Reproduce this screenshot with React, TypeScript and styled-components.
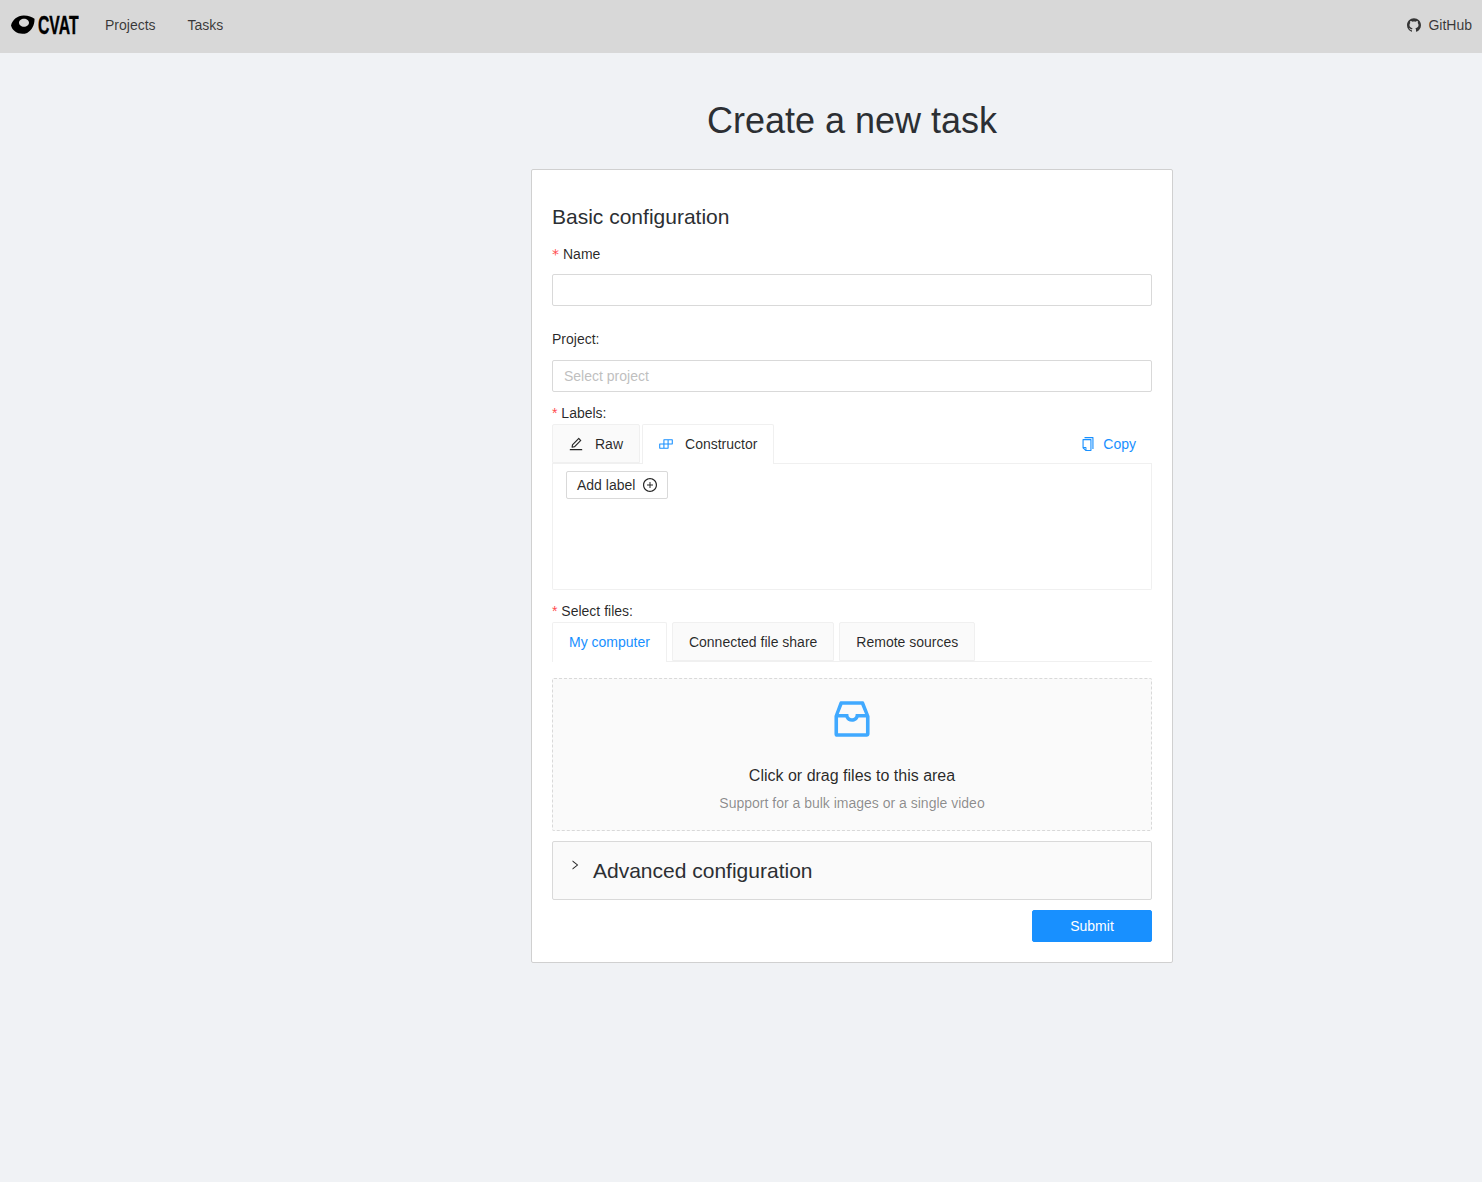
import React from 'react';
import styled, { createGlobalStyle } from 'styled-components';
import {
  AiOutlineBuild,
  AiOutlineCopy,
  AiOutlineEdit,
  AiOutlineInbox,
  AiOutlinePlusCircle,
  AiOutlineRight,
  AiOutlineGithub,
} from 'react-icons/ai';

const Global = createGlobalStyle`
  html, body { margin: 0; padding: 0; background: #f0f2f5; }
  body {
    font-family: "Liberation Sans", Arial, sans-serif;
    font-size: 14px;
    line-height: 1.5715;
    color: rgba(0, 0, 0, 0.85);
    min-height: 1182px;
  }
  * { box-sizing: border-box; }
`;

const Header = styled.header`
  height: 53px;
  background: #d8d8d8;
  display: flex;
  align-items: center;
  justify-content: space-between;
  padding: 0 10px 3px 11px;
`;
const Nav = styled.nav`
  display: flex;
  align-items: center;
`;
const Logo = styled.div`
  display: flex;
  align-items: center;
  width: 94px;
  color: #000;
`;
const Wordmark = styled.span`
  font-family: "Liberation Sans", sans-serif;
  font-weight: 700;
  font-size: 25px;
  line-height: 24px;
  display: inline-block;
  transform: scaleX(0.63);
  transform-origin: left center;
  margin-left: 3px;
  -webkit-text-stroke: 0.4px #000;
`;
const NavLink = styled.a`
  color: rgba(0, 0, 0, 0.75);
  margin-right: 32px;
`;
const Github = styled.a`
  display: flex;
  align-items: center;
  gap: 6px;
  color: rgba(0, 0, 0, 0.75);
`;
const Main = styled.main`
  width: 642px;
  margin-left: 531px;
  padding-top: 40px;
`;
const Title = styled.h1`
  margin: 0 0 20px;
  font-size: 36px;
  line-height: 56px;
  font-weight: 400;
  text-align: center;
  color: #2c2f33;
`;
const Card = styled.section`
  background: #fff;
  border: 1px solid #d0d0d0;
  border-radius: 2px;
  padding: 32px 20px 20px;
  display: flex;
  flex-direction: column;
`;
const SectionTitle = styled.h2`
  margin: 0;
  font-size: 21px;
  line-height: 30px;
  font-weight: 400;
  color: #2c2f33;
`;
const FieldLabel = styled.label<{ $top: number }>`
  display: block;
  margin-top: ${(p) => p.$top}px;
  height: 22px;
  line-height: 22px;
  color: rgba(0, 0, 0, 0.85);
`;
const Req = styled.span`
  color: #ff4d4f;
`;
const WideReq = styled.span`
  color: #ff4d4f;
  font-family: "DejaVu Sans", sans-serif;
  margin-right: 4px;
`;
const TextInput = styled.input<{ $top: number }>`
  display: block;
  width: 100%;
  height: 32px;
  margin-top: ${(p) => p.$top}px;
  padding: 4px 11px;
  border: 1px solid #d9d9d9;
  border-radius: 2px;
  background: #fff;
  font: inherit;
  color: rgba(0, 0, 0, 0.85);
  outline: none;
  &::placeholder { color: #bfbfbf; }
`;
const TabBar = styled.div`
  display: flex;
  height: 40px;
  border-bottom: 1px solid #f0f0f0;
  gap: 2px;
  align-items: stretch;
`;
const Tab = styled.div<{ $active?: boolean; $blue?: boolean }>`
  display: flex;
  align-items: center;
  padding: 0 16px ${(p) => (p.$active ? 1 : 0)}px;
  height: ${(p) => (p.$active ? 40 : 39)}px;
  background: ${(p) => (p.$active ? '#fff' : '#fafafa')};
  border: 1px solid #f0f0f0;
  border-bottom: ${(p) => (p.$active ? '0' : '1px solid #f0f0f0')};
  border-radius: 2px 2px 0 0;
  color: ${(p) => (p.$blue ? '#1890ff' : 'rgba(0, 0, 0, 0.85)')};
  white-space: nowrap;
  svg { margin: 0 11px 0 -1px; width: 16px; height: 16px; }
`;
const CopyAction = styled.div`
  margin-left: auto;
  display: flex;
  align-items: center;
  gap: 7px;
  padding-right: 16px;
  color: #1890ff;
  svg { width: 16px; height: 16px; }
`;
const LabelsBody = styled.div`
  height: 126px;
  border: 1px solid #f0f0f0;
  border-top: 0;
  border-radius: 0 0 2px 2px;
  padding: 7px 13px;
`;
const OutlineButton = styled.button`
  display: inline-flex;
  align-items: center;
  gap: 7px;
  height: 28px;
  padding: 0 9px 0 10px;
  background: #fff;
  border: 1px solid #d9d9d9;
  border-radius: 2px;
  font: inherit;
  color: rgba(0, 0, 0, 0.85);
  svg { width: 16px; height: 16px; }
`;
const FilesTabs = styled(TabBar)`
  gap: 5px;
`;
const Dropzone = styled.div`
  margin-top: 16px;
  height: 153px;
  background: #fafafa;
  border: 1px dashed #d9d9d9;
  border-radius: 2px;
  display: flex;
  flex-direction: column;
  align-items: center;
  padding-top: 16px;
  svg { width: 48px; height: 48px; color: #40a9ff; display: block; }
`;
const DropTitle = styled.p`
  margin: 21px 0 4px;
  font-size: 16px;
  line-height: 24px;
`;
const DropHint = styled.p`
  margin: 0;
  line-height: 22px;
  color: rgba(0, 0, 0, 0.45);
`;
const Collapse = styled.div`
  margin-top: 10px;
  height: 59px;
  background: #fafafa;
  border: 1px solid #d9d9d9;
  border-radius: 2px;
  display: flex;
  align-items: flex-start;
  padding: 16px;
  svg { width: 12px; height: 12px; margin: 1px 12px 0 0; color: rgba(0, 0, 0, 0.85); }
`;
const CollapseTitle = styled.span`
  font-size: 21px;
  line-height: 26px;
  color: #2c2f33;
`;
const Footer = styled.div`
  display: flex;
  justify-content: flex-end;
  margin-top: 10px;
`;
const PrimaryButton = styled.button`
  width: 120px;
  height: 32px;
  background: #1890ff;
  border: 1px solid #1890ff;
  border-radius: 2px;
  color: #fff;
  font: inherit;
`;

export default function App() {
  return (
    <>
      <Global />
      <Header>
        <Nav>
          <Logo>
            <svg width="24" height="20" viewBox="0 0 24 20" aria-hidden="true">
              <path
                fillRule="evenodd"
                d="M0 10.500C1.500 4.500 6.500.800 12.500.500c4.600-.100 8.500 1.200 11 3.200.300 5.600-2.400 11.700-7.400 14.200C9.200 20.500 1.600 17 0 10.500ZM13 3.800c-2.800 0-5 1.800-5 4s2.200 4 5 4 5-1.800 5-4-2.200-4-5-4Z"
                fill="#000"
              />
            </svg>
            <Wordmark>CVAT</Wordmark>
          </Logo>
          <NavLink>Projects</NavLink>
          <NavLink>Tasks</NavLink>
        </Nav>
        <Github>
          <AiOutlineGithub size={16} />
          GitHub
        </Github>
      </Header>
      <Main>
        <Title>Create a new task</Title>
        <Card>
          <SectionTitle>Basic configuration</SectionTitle>
          <FieldLabel $top={11}>
            <WideReq>*</WideReq>Name
          </FieldLabel>
          <TextInput $top={9} />
          <FieldLabel $top={22}>Project:</FieldLabel>
          <TextInput $top={10} placeholder="Select project" />
          <FieldLabel $top={10}>
            <Req>*</Req> Labels:
          </FieldLabel>
          <TabBar>
            <Tab>
              <AiOutlineEdit />
              Raw
            </Tab>
            <Tab $active>
              <AiOutlineBuild color="#1890ff" />
              Constructor
            </Tab>
            <CopyAction>
              <AiOutlineCopy />
              Copy
            </CopyAction>
          </TabBar>
          <LabelsBody>
            <OutlineButton>
              Add label
              <AiOutlinePlusCircle />
            </OutlineButton>
          </LabelsBody>
          <FieldLabel $top={10}>
            <Req>*</Req> Select files:
          </FieldLabel>
          <FilesTabs>
            <Tab $active $blue>
              My computer
            </Tab>
            <Tab>Connected file share</Tab>
            <Tab>Remote sources</Tab>
          </FilesTabs>
          <Dropzone>
            <AiOutlineInbox />
            <DropTitle>Click or drag files to this area</DropTitle>
            <DropHint>Support for a bulk images or a single video</DropHint>
          </Dropzone>
          <Collapse>
            <AiOutlineRight />
            <CollapseTitle>Advanced configuration</CollapseTitle>
          </Collapse>
          <Footer>
            <PrimaryButton>Submit</PrimaryButton>
          </Footer>
        </Card>
      </Main>
    </>
  );
}
